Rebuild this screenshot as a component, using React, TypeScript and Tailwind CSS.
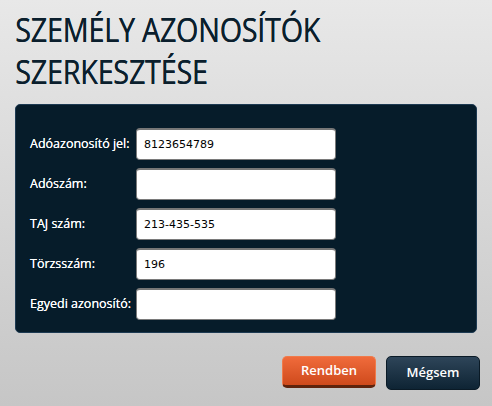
export default function App() {
  const rows: { label: string; value: string }[] = [
    { label: "Adóazonosító jel:", value: "8123654789" },
    { label: "Adószám:", value: "" },
    { label: "TAJ szám:", value: "213-435-535" },
    { label: "Törzsszám:", value: "196" },
    { label: "Egyedi azonosító:", value: "" },
  ];

  return (
    <div className="h-[406px] w-[492px] overflow-hidden bg-gradient-to-b from-[#e8e8e8] to-[#c6c6c6] font-['Open_Sans',sans-serif]">
      <h1 className="origin-left scale-x-[0.9] px-[17px] pt-[9px] text-[32px] leading-[42px] text-[#0b1f2d] tracking-[-0.3px] [text-shadow:0_0_0.4px_#0b1f2d]">
        SZEMÉLY AZONOSÍTÓK
        <br />
        SZERKESZTÉSE
      </h1>

      <div className="mx-[15px] mt-[11px] h-[229px] rounded-[5px] border border-[#1d3a52] bg-[#061c2a] pl-[14px] pt-[23px]">
        <div className="flex flex-col gap-[8px]">
          {rows.map((r) => (
            <div key={r.label} className="flex items-center">
              <div className="w-[106px] text-[12.5px] text-white [text-shadow:0_0_0.3px_#fff]">{r.label}</div>
              <input
                readOnly
                value={r.value}
                className="h-[32px] w-[200px] rounded-[4px] border border-[#7a7a7a] border-t-2 border-t-[#777] bg-white px-[7px] font-['DejaVu_Sans',sans-serif] text-[11px] text-black outline-none"
              />
            </div>
          ))}
        </div>
      </div>

      <div className="mt-[23px] flex justify-end gap-[10px] pr-[12px]">
        <button className="h-[32px] w-[94px] rounded-[5px] border border-[#f07a4a] border-b-[3px] border-b-[#5e230c] bg-gradient-to-b from-[#f06b3b] to-[#cf4a1b] text-[13px] font-semibold text-white">
          Rendben
        </button>
        <button className="h-[34px] w-[94px] rounded-[5px] border border-[#0a1a26] bg-gradient-to-b from-[#2e4559] to-[#0e2434] text-[13px] font-semibold text-white">
          Mégsem
        </button>
      </div>
    </div>
  );
}
